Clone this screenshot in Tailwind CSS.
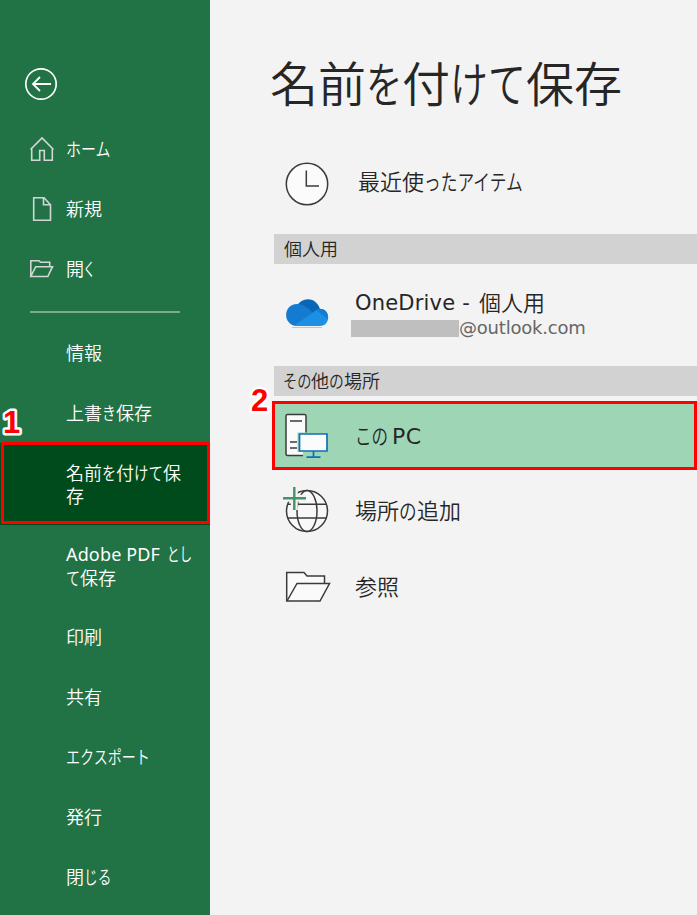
<!DOCTYPE html>
<html lang="ja">
<head>
<meta charset="utf-8">
<title>名前を付けて保存</title>
<script src="https://cdn.jsdelivr.net/npm/@tailwindcss/browser@4"></script>
</head>
<body class="flex w-[697px] h-[915px] overflow-hidden bg-[#f3f3f3] font-['Noto_Sans_CJK_JP',sans-serif] font-[350] text-[#262626]">
<nav class="relative w-[210px] h-[915px] shrink-0 bg-[#217346] text-white text-[18px] leading-[23px] whitespace-nowrap">
  <div class="h-[118px] pl-[24px] pt-[67px]">
    <svg class="block" width="34" height="34" viewBox="0 0 34 34" fill="none" stroke="#fff"><circle cx="17" cy="17" r="15.2" stroke-width="1.7"/><path d="M27 17H9.5M16 10l-7 7 7 7" stroke-width="1.8"/></svg>
  </div>
  <div class="flex items-center h-[60px] pl-[29px]">
    <svg class="w-[37px] h-[26px] mt-[2px] shrink-0" viewBox="0 0 37 26" fill="none" stroke="#d3d6d4" stroke-width="1.6"><path d="M1.500 13.500L13 2l11.500 11.500M2.700 12.500V24.300H10.700V14.500h4.600v9.800h8V12.500"/></svg>
    <span class="inline-block w-[45px] origin-left scale-x-[.83]">ホーム</span>
  </div>
  <div class="flex items-center h-[60px] pl-[29px]">
    <svg class="w-[37px] h-[26px] mt-[2px] shrink-0" viewBox="0 0 37 26" fill="none" stroke="#d3d6d4" stroke-width="1.6"><path d="M4.700 1.700H15l6.500 7V24.300H4.700ZM14.500 1.700V8.800H21.500"/></svg>
    <span>新規</span>
  </div>
  <div class="flex items-center h-[60px] pl-[29px]">
    <svg class="w-[37px] h-[26px] mt-[2px] shrink-0" viewBox="0 0 37 26" fill="none" stroke="#d3d6d4" stroke-width="1.6"><path d="M1.800 20.500V4.700H10l1.500 1.500h9.200v4.500M1.800 20.500L6.700 10.700H23.500L18.800 20.500Z"/></svg>
    <span>開<span class="inline-block w-[10px] origin-left scale-x-[.7] -ml-[1px]">く</span></span>
  </div>
  <div class="h-[24px] pt-[13px] pl-[30px]"><div class="w-[150px] h-[2px] bg-[#7aab8f]"></div></div>
  <div class="flex items-center h-[60px] pl-[66px]"><span>情報</span></div>
  <div class="flex items-center h-[61px] pl-[66px] pb-px"><span>上書<span class="inline-block w-[14px] origin-left scale-x-[.78]">き</span>保存</span></div>
  <div class="flex items-center h-[82px] pl-[66px] bg-[#004b1c]"><span>名前<span class="inline-block w-[14px] origin-left scale-x-[.78]">を</span>付<span class="inline-block w-[29px] origin-left scale-x-[.8]">けて</span>保<br>存</span></div>
  <div class="flex items-center h-[81px] pl-[66px]"><span><span class="inline-block w-[101px] font-['Noto_Sans'] font-normal tracking-[.15px]">Adobe PDF</span><span class="inline-block w-[26px] origin-left scale-x-[.7]">とし</span><br><span class="inline-block w-[14px] origin-left scale-x-[.78]">て</span>保存</span></div>
  <div class="flex items-center h-[60px] pl-[66px]"><span>印刷</span></div>
  <div class="flex items-center h-[60px] pl-[66px]"><span>共有</span></div>
  <div class="flex items-center h-[60px] pl-[66px]"><span class="inline-block w-[84px] origin-left scale-x-[.78]">エクスポート</span></div>
  <div class="flex items-center h-[60px] pl-[66px]"><span>発行</span></div>
  <div class="flex items-center h-[60px] pl-[66px]"><span>閉<span class="inline-block w-[27px] origin-left scale-x-[.76]">じる</span></span></div>
  <div class="absolute left-[1px] top-[442px] w-[209px] h-[82px] border-3 border-[#f00]"></div>
  <svg class="absolute left-0 top-[401px]" width="30" height="42"><text x="3" y="32" font-family="Liberation Sans, sans-serif" font-weight="700" font-size="31" fill="#f00" stroke="#fff" stroke-width="5" stroke-linejoin="round" paint-order="stroke">1</text></svg>
</nav>
<main class="relative w-[487px] h-[915px] whitespace-nowrap text-[22px] leading-[30px]">
  <h1 class="flex items-center h-[145px] pt-[16px] pl-[60px] text-[48px] leading-[60px]"><span>名前<span class="inline-block w-[36px] origin-left scale-x-[.76]">を</span>付<span class="inline-block w-[76px] origin-left scale-x-[.79]">けて</span>保存</span></h1>
  <div class="flex items-center h-[77px] pl-[75px]">
    <svg class="w-[73px] h-[44px] shrink-0" viewBox="0 0 73 44" fill="none" stroke="#3b3b3b" stroke-width="1.5"><circle cx="22" cy="22" r="20.700" fill="#fbfbfb"/><path d="M21.300 8.500V24H34"/></svg>
    <span class="pb-[7px]">最近使<span class="inline-block w-[99px] origin-left scale-x-[.76]">ったアイテム</span></span>
  </div>
  <div class="h-[12px]"></div>
  <div class="flex items-center h-[30px] ml-[64px] pl-[10px] pb-[2px] bg-[#d2d2d2] text-[18px]">個人用</div>
  <div class="flex h-[102px] pl-[75px] pt-[24px]">
    <svg class="w-[66px] h-[46px] mt-[4px] shrink-0" viewBox="0 0 66 46"><path d="M7 35.500H37" stroke="#bcc9c8"/><path d="M10 18C14 5 30 3 35 17L40 29L14 28Z" fill="#0866b8"/><path d="M12 34C-3 33-2 12 12 12c5 0 8 2 12 5l13 14-5 3Z" fill="#147bd0"/><path d="M9 33.500L26 22c3-2 5-5 9-5 11 0 11 17 0 17H12Z" fill="#1c90e2"/><path d="M31 18c6-4 14 2 11.500 9Z" fill="#147dd3"/></svg>
    <div>
      <div class="flex items-center h-[30px] pl-[4px]"><span class="w-[124px] text-[21px] tracking-[.2px] font-['DejaVu_Sans'] font-normal">OneDrive -</span><span class="pb-[4px]">個人用</span></div>
      <div class="flex items-center h-[18px] mt-[1px]"><div class="w-[108px] h-[17px] mt-px bg-[#bfbfbf]"></div><span class="text-[18px] tracking-[-.2px] text-[#666] font-['DejaVu_Sans'] font-normal">@outlook.com</span></div>
    </div>
  </div>
  <div class="flex items-center h-[30px] ml-[64px] pl-[9px] pb-[2px] bg-[#d2d2d2] text-[18px]"><span><span class="inline-block w-[28px] origin-left scale-x-[.79]">その</span>他<span class="inline-block w-[15px] origin-left scale-x-[.82]">の</span>場所</span></div>
  <div class="flex items-center h-[69px] mt-[5px] ml-[62px] pl-[8px] border-3 border-[#f00] bg-[#9ed5b5]">
    <svg class="w-[72px] h-[48px] mb-[2px] shrink-0" viewBox="0 0 72 48" fill="#fbfbfb" stroke="#3b3b3b" stroke-width="1.5"><path d="M4.500 3.500H21.500Q23 3.500 23 5V44.500H4.500Q3 44.500 3 43V5Q3 3.500 4.500 3.500Z"/><path d="M7 10H19M7 31H14M7 37H14"/><path d="M14.500 21.500H45.500V41H35V48H20V41H14.500Z" fill="#9ed5b5" stroke="none"/><path d="M16.500 23H44V40H16.500Z" stroke="#0e70bd" stroke-width="1.700"/><path d="M30.500 40v6M23.500 46.200H37.500" stroke="#0e70bd" stroke-width="1.700"/></svg>
    <span><span class="inline-block w-[37px] origin-left scale-x-[.75]">この</span><span class="font-['DejaVu_Sans'] font-normal text-[22px] tracking-[.6px]">PC</span></span>
  </div>
  <div class="flex items-center h-[76px] mt-[2px] pl-[72px]">
    <svg class="w-[73px] h-[50px] shrink-0" viewBox="0 0 73 50" fill="none" stroke="#3b3b3b" stroke-width="1.500"><circle cx="25" cy="26" r="20.500" fill="#f8f8f8"/><ellipse cx="25" cy="26" rx="10" ry="20.500"/><path d="M6 19.200H44M6 33H44"/><path d="M1 13.300H24M12.300 2V25" stroke="#f3f3f3" stroke-width="7"/><path d="M1 13.300H24M12.300 2V25" stroke="#439467" stroke-width="2.400"/></svg>
    <span class="pb-[2px]">場所<span class="inline-block w-[18px] origin-left scale-x-[.8]">の</span>追加</span>
  </div>
  <div class="flex items-center h-[76px] pl-[75px]">
    <svg class="w-[70px] h-[40px] mt-[2px] shrink-0" viewBox="0 0 70 40" fill="#fafafa" stroke="#3b3b3b" stroke-width="1.500" stroke-linejoin="miter"><path d="M1.700 34V5.500H19L22 9H39.500V17"/><path d="M2 34L12 16.500H44.500L35 34Z"/></svg>
    <span class="pb-[2px]">参照</span>
  </div>
  <svg class="absolute left-[34px] top-[380px]" width="34" height="42"><text x="7" y="31" font-family="Liberation Sans, sans-serif" font-weight="700" font-size="31" fill="#f00" stroke="#fff" stroke-width="5" stroke-linejoin="round" paint-order="stroke">2</text></svg>
</main>
</body>
</html>
